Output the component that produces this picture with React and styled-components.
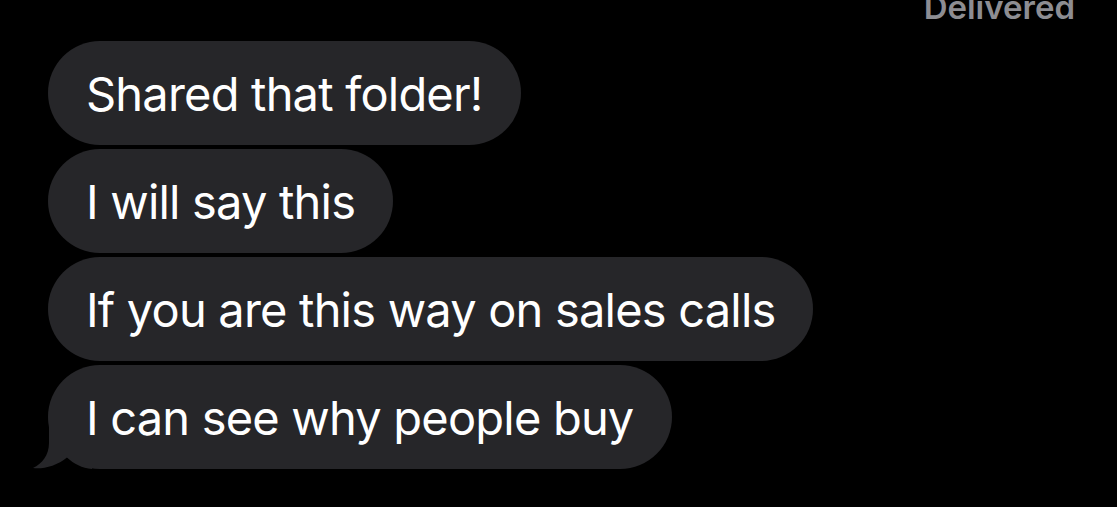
import styled, { createGlobalStyle } from "styled-components";

const GlobalStyle = createGlobalStyle`
  html, body {
    margin: 0;
    padding: 0;
    background: #000;
  }
  body {
    font-family: Inter, "Liberation Sans", sans-serif;
    -webkit-font-smoothing: antialiased;
  }
`;

const Screen = styled.div`
  width: 1117px;
  height: 507px;
  background: #000;
  overflow: hidden;
  display: flex;
  flex-direction: column;
`;

const StatusRow = styled.div`
  height: 24px;
  display: flex;
  justify-content: flex-end;
  align-items: flex-end;
  padding-right: 42px;
  overflow: hidden;
`;

const Status = styled.span`
  color: #8d8d92;
  font-size: 33px;
  font-weight: 600;
  line-height: 1;
`;

const Thread = styled.div`
  display: flex;
  flex-direction: column;
  align-items: flex-start;
  gap: 4px;
  padding: 17px 0 0 48px;
`;

const Bubble = styled.div`
  position: relative;
  height: 104px;
  box-sizing: border-box;
  padding: 0 38px;
  display: flex;
  align-items: center;
  background: #262629;
  border-radius: 52px;
  color: #fff;
  font-size: 47px;
  font-weight: 400;
  letter-spacing: -0.8px;
  white-space: nowrap;
`;

const Label = styled.span`
  position: relative;
`;

// tail sits at the bottom-left corner of the last bubble
const Tail = styled.svg`
  position: absolute;
  left: -16px;
  bottom: 0;
  width: 60px;
  height: 44px;
`;

const messages = [
  "Shared that folder!",
  "I will say this",
  "If you are this way on sales calls",
  "I can see why people buy",
];

export default function App() {
  return (
    <>
      <GlobalStyle />
      <Screen>
        <StatusRow>
          <Status>Delivered</Status>
        </StatusRow>
        <Thread>
          {messages.map((text, i) => (
            <Bubble key={i}>
              {i === messages.length - 1 && (
                <Tail viewBox="0 0 60 44">
                  <path
                    d="M17 0 L17 18 C17 30 10 39 1 43 C10 44.5 25 41 35 32.5 C42 39 50 43 60 44 L60 0 Z"
                    fill="#262629"
                  />
                </Tail>
              )}
              <Label>{text}</Label>
            </Bubble>
          ))}
        </Thread>
      </Screen>
    </>
  );
}
